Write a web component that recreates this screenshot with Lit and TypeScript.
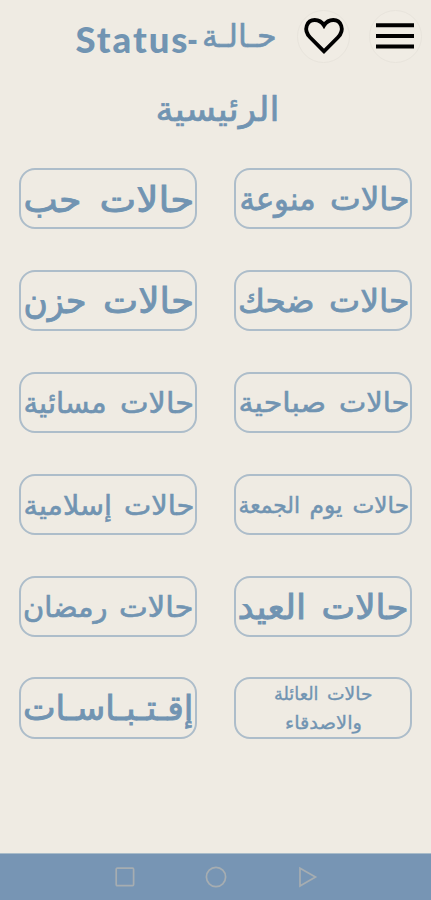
import { LitElement, css, html, svg } from "lit";
import { customElement, property } from "lit/decorators.js";

// A word of a label: text, left edge, right edge, baseline, font size, outline weight.
type Word = [string, number, number, number, number, number];

const drawWord = ([text, left, right, base, size, weight]: Word) => svg`
  <text class="ar" x=${right} y=${base} font-size=${size} stroke-width=${weight}
    textLength=${right - left} lengthAdjust="spacingAndGlyphs">${text}</text>`;

const categories: Word[][] = [
  [["حالات", 96, 175.5, 41, 32, 0.8], ["منوعة", 5.5, 81.5, 41, 32, 0.8]],
  [["حالات", 80.5, 175.5, 42.7, 35.5, 0.9], ["حب", 4.5, 62.5, 42.7, 35.5, 0.9]],
  [["حالات", 95, 175.5, 40.5, 32, 0.8], ["ضحك", 4, 80.5, 40.5, 32, 0.8]],
  [["حالات", 84, 175, 42.3, 35.5, 0.9], ["حزن", 4.5, 67.5, 42.3, 35.5, 0.9]],
  [["حالات", 105, 175.5, 39, 28, 0.6], ["صباحية", 4.5, 92, 39, 28, 0.6]],
  [["حالات", 101, 175, 39.5, 29, 0.6], ["مسائية", 4.5, 87.5, 39.5, 29, 0.6]],
  [["حالات", 118.5, 175, 38.3, 23, 0.5], ["يوم", 75.5, 108.5, 38.3, 23, 0.5], ["الجمعة", 4.5, 66, 38.3, 23, 0.5]],
  [["حالات", 105, 175.5, 39.5, 28, 0.6], ["إسلامية", 4.5, 93, 39.5, 28, 0.6]],
  [["حالات", 87.5, 174.5, 42.3, 34, 0.9], ["العيد", 3.5, 72, 42.3, 34, 0.9]],
  [["حالات", 100, 174.5, 40.2, 28.5, 0.7], ["رمضان", 4, 88.5, 40.2, 28.5, 0.7]],
  [["حالات", 93, 138.5, 22, 18, 0.35], ["العائلة", 40, 84.5, 22, 18, 0.35], ["والاصدقاء", 51, 128, 50.5, 18, 0.35]],
  [["إقـتـبـاسـات", 4, 174.5, 42, 34.5, 0.9]],
];

const textStyles = css`
  svg { display: block; overflow: visible; }
  .ar {
    font-family: "DejaVu Sans", sans-serif;
    direction: rtl;
    text-anchor: start;
    fill: #7194b2;
    stroke: #7194b2;
  }
`;

@customElement("category-button")
export class CategoryButton extends LitElement {
  @property({ attribute: false }) words: Word[] = [];

  static styles = [textStyles, css`
    :host {
      display: block;
      box-sizing: border-box;
      height: 61.4px;
      border: 2px solid #adbdca;
      border-radius: 16px;
    }
    svg { width: 100%; height: 100%; }
  `];

  render() {
    return html`<svg viewBox="2 1 174 57">${this.words.map(drawWord)}</svg>`;
  }
}

@customElement("app-root")
export class AppRoot extends LitElement {
  static styles = [textStyles, css`
    :host {
      display: flex;
      flex-direction: column;
      height: 900px;
      box-sizing: border-box;
      background: #efebe3;
      overflow: hidden;
    }
    header {
      display: flex;
      justify-content: flex-end;
      align-items: center;
      height: 72px;
      padding-right: 9px;
      gap: 19px;
      box-sizing: border-box;
    }
    .brand { width: 200px; height: 72px; margin-right: 2px; }
    .latin {
      font-family: Lato, sans-serif;
      font-weight: 900;
      font-size: 36.5px;
      fill: #7194b2;
    }
    .round {
      width: 53px;
      height: 53px;
      box-sizing: border-box;
      border-radius: 50%;
      border: 1.5px solid #e8e4dc;
      background: #f0ece4;
      display: grid;
      place-items: center;
    }
    .menu { margin-right: 2px; }
    .heading { width: 122px; height: 64px; margin: 0 0 0 155.5px; }
    .list {
      display: grid;
      grid-template-columns: 178px 178px;
      justify-content: space-between;
      direction: rtl;
      row-gap: 40.5px;
      padding: 32px 18.7px 0 19.3px;
      flex: 1;
      align-content: start;
    }
    nav {
      display: flex;
      justify-content: center;
      gap: 70px;
      height: 47px;
      box-sizing: border-box;
      border-top: 1px solid #a9bcc9;
      background: #7795b4;
      align-items: center;
    }
    nav svg { fill: none; stroke: #a6adb1; stroke-width: 1.7; }
  `];

  render() {
    return html`
      <header>
        <svg class="brand" viewBox="76 0 200 72">
          <text class="latin" x="75.5" y="52.5" textLength="112" lengthAdjust="spacing">Status</text>
          <text class="latin" x="187" y="53" textLength="11" lengthAdjust="spacingAndGlyphs">-</text>
          ${drawWord(["حـالـة", 202, 276.5, 46.5, 31.5, 0.6])}
        </svg>
        <div class="round">
          <svg width="42" height="38" viewBox="0 0 42 38" fill="none" stroke="#000" stroke-width="3.8" stroke-linejoin="miter">
            <path d="M21 34.3 L7.2 20.5 C-0.5 12.5 4.2 3 11.7 3 C16.2 3 19 5.2 21 8.5 C23 5.2 25.8 3 30.3 3 C37.8 3 42.5 12.5 34.8 20.5 Z" />
          </svg>
        </div>
        <div class="round">
          <svg class="menu" width="38" height="26" viewBox="0 0 38 26" stroke="#000" stroke-width="4">
            <path d="M0 2.2H38M0 12.9H38M0 23.6H38" />
          </svg>
        </div>
      </header>
      <svg class="heading" viewBox="156 72 122 64">
        ${drawWord(["الرئيسية", 155.5, 279.5, 120.7, 34.5, 0.7])}
      </svg>
      <main class="list">
        ${categories.map((words) => html`<category-button .words=${words}></category-button>`)}
      </main>
      <nav>
        <svg width="20" height="20"><rect x="1.2" y="1.2" width="17.4" height="17.4" rx="1" /></svg>
        <svg width="22" height="22"><circle cx="11" cy="11" r="9.6" /></svg>
        <svg width="20" height="22"><path d="M3 2.2V20L18.5 11Z" /></svg>
      </nav>`;
  }
}
